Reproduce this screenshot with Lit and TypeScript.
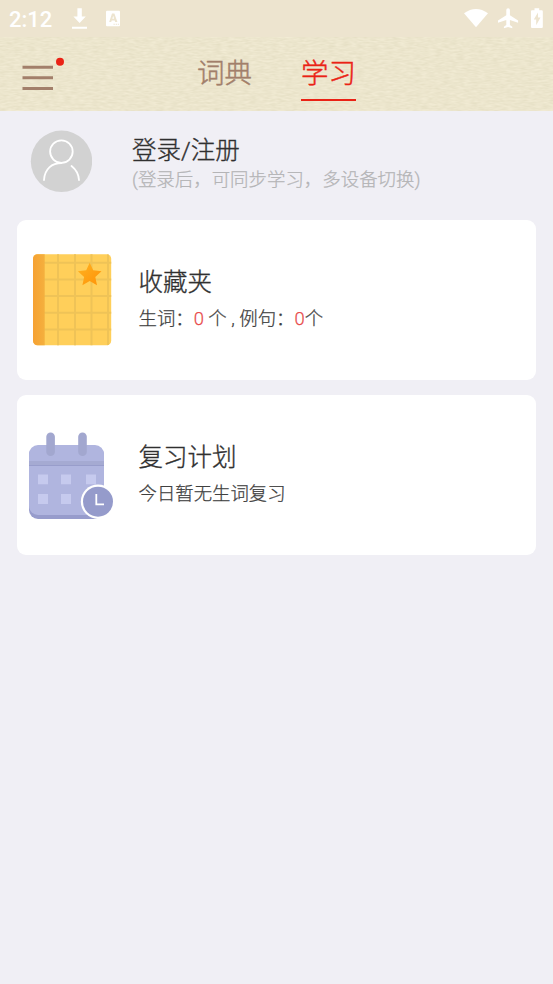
import { LitElement, html, svg, css } from "lit";
import { customElement } from "lit/decorators.js";

const FONT = css`Roboto, "Noto Sans CJK SC", sans-serif`;

@customElement("status-bar")
class StatusBar extends LitElement {
  static styles = css`
    :host {
      display: flex;
      align-items: center;
      height: 37px;
      background: #ede4cf;
      color: #fff;
      font: 500 22px/37px ${FONT};
    }
    .time { box-sizing: border-box; width: 71px; padding: 1px 0 0 9px; }
    .grow { flex: 1; }
    svg { display: block; fill: #fff; }
  `;
  render() {
    return html`
      <span class="time">2:12</span>
      <svg width="50" height="37" viewBox="71 0 50 37">
        <path d="M77.4 8.3h4.4v8.2h4L79.6 23l-6.2-6.500h4zM72 26.800h15v2H72z" />
        <rect x="106" y="10.800" width="14" height="15.400" rx="1" />
        <path fill="#ede4cf" fill-rule="evenodd" d="M112 13.500h2.400l3 8.500h-2.200l-.5-1.600h-3l-.5 1.600H109.200zm1.200 2.200-.9 3h1.800zM113.500 23.800h1.300v1h-1.300zM115.700 23.800h1.300v1h-1.300zM117.800 23.800h1.200v1h-1.200z" />
      </svg>
      <span class="grow"></span>
      <svg width="93" height="37" viewBox="460 0 93 37">
        <path d="M464 13.200Q476 4.700 488 13.200L476 27.300z" />
        <path d="M506.300 10a1.800 1.800 0 0 1 3.600 0v5.300l8.200 5.200v2.200l-8.200-2.600v5l2.400 1.700v1.500l-4.200-1.200-4.200 1.200v-1.500l2.400-1.700v-5l-8.300 2.600v-2.200l8.300-5.200z" />
        <path d="M534.500 8.300h4.700v2h2.600a1 1 0 0 1 1 1v15.600a1 1 0 0 1-1 1h-9.800a1 1 0 0 1-1-1V11.300a1 1 0 0 1 1-1h2.500z" />
        <path fill="#ede4cf" d="M538 12.500v5h2.500l-4.300 7.800v-5.800h-2.400z" />
      </svg>
    `;
  }
}

@customElement("top-bar")
class TopBar extends LitElement {
  static styles = css`
    :host {
      display: flex;
      position: relative;
      height: 74px;
      background: #ebe4c9;
      font: 300 27.500px/44px ${FONT};
      -webkit-text-stroke: 0.450px currentColor;
      color: #a27f6a;
    }
    .paper { position: absolute; inset: 0; width: 100%; height: 100%; }
    .menu { position: relative; display: block; width: 197px; height: 74px; }
    .tabs { position: relative; display: flex; gap: 49px; padding-top: 15px; }
    .tab { width: 55px; height: 47px; white-space: nowrap; border-bottom: 2.500px solid transparent; }
    .active { color: #ea2215; border-color: #ea2215; }
  `;
  render() {
    return html`
      <svg class="paper">
        <filter id="grain" x="0" y="0" width="100%" height="100%" color-interpolation-filters="sRGB">
          <feTurbulence type="fractalNoise" baseFrequency="0.14 0.55" numOctaves="2" seed="8" result="n" />
          <feColorMatrix in="n" type="matrix" values="0.070 0 0 0 0.890  0.070 0 0 0 0.865  0.090 0 0 0 0.758  0 0 0 0 1" />
        </filter>
        <rect width="100%" height="100%" filter="url(#grain)" />
      </svg>
      <svg class="menu" viewBox="0 37 197 74">
        <path d="M22.500 67.300H53M22.500 77.800H53M22.500 88.500H53" stroke="#a27f6a" stroke-width="3" />
        <circle cx="60" cy="61.700" r="4" fill="#ea2215" />
      </svg>
      <nav class="tabs">
        <span class="tab">词典</span>
        <span class="tab active">学习</span>
      </nav>
    `;
  }
}

@customElement("login-row")
class LoginRow extends LitElement {
  static styles = css`
    :host { display: flex; height: 109px; font-family: ${FONT}; font-weight: 300; -webkit-text-stroke: 0.350px currentColor; }
    .avatar { display: block; margin: 19px 40px 0 30px; }
    .title { font-size: 24.500px; line-height: 30px; color: #303030; padding-top: 25px; }
    .hint { font-size: 18.450px; line-height: 28px; color: #b4b4b6; white-space: nowrap; -webkit-text-stroke-width: 0.250px; }
  `;
  render() {
    return html`
      <svg class="avatar" width="62" height="62" viewBox="30 130 62 62">
        <circle cx="61.500" cy="161.300" r="30.700" fill="#d2d2d2" />
        <g fill="none" stroke="#fff" stroke-width="1.800" stroke-linecap="round">
          <circle cx="61.400" cy="151.600" r="11.300" />
          <path d="M44 180C44.500 169 52 163 61.500 163M71.500 166Q78.500 171.500 79 180" />
        </g>
      </svg>
      <div>
        <div class="title">登录/注册</div>
        <div class="hint">(登录后，可同步学习，多设备切换)</div>
      </div>
    `;
  }
}

const notebook = svg`
  <defs>
    <linearGradient id="spine"><stop stop-color="#f6a133" /><stop offset="1" stop-color="#f4b03e" /></linearGradient>
    <linearGradient id="star" x2="1" y2="1"><stop stop-color="#ffb321" /><stop offset="1" stop-color="#ff9208" /></linearGradient>
    <clipPath id="cover"><rect x="33" y="254.300" width="78.200" height="90.900" rx="4.500" /></clipPath>
  </defs>
  <g clip-path="url(#cover)">
    <path fill="#ffcf5a" d="M33 254h79v92H33z" />
    <path d="M44 262.800h68M44 279.500h68M44 296.100h68M44 312.800h68M44 329.400h68M58 254v92M75 254v92M91.500 254v92M108 254v92" stroke="#efc357" stroke-width="2" />
    <path fill="url(#spine)" d="M33 254h11.700v92H33z" />
  </g>
  <path fill="url(#star)" d="M89.700 262.700l3.500 7.600 8.300 1-6.200 5.600 1.700 8.400-7.300-4.200-7.300 4.200 1.700-8.400-6.200-5.600 8.300-1z" />
`;

const calendar = svg`
  <rect x="29" y="446" width="75" height="73" rx="9" fill="#979ccc" />
  <rect x="29" y="445" width="75" height="70" rx="9" fill="#b0b5df" />
  <path fill="#a5aad2" d="M29 461h75v4H29z" />
  <path fill="#989dcb" d="M29 465h75v1H29z" />
  <rect x="46.300" y="432.500" width="8.600" height="23.500" rx="4.300" fill="#a2a7cf" />
  <rect x="78.200" y="432.500" width="8.600" height="23.500" rx="4.300" fill="#a2a7cf" />
  <path fill="#c6caee" d="M38 474.500h10v9.700H38zM61 474.500h10v9.700H61zM86 474.500h10v9.700H86zM38 494h10v10H38zM61 494h10v10H61z" />
  <circle cx="98" cy="501.700" r="17.200" fill="#fff" />
  <circle cx="98" cy="501.700" r="15" fill="#959bcb" />
  <path d="M96.300 494v10.300h7.700" fill="none" stroke="#fff" stroke-width="1.800" />
`;

@customElement("study-card")
class StudyCard extends LitElement {
  static properties = { heading: {}, icon: {} };
  declare heading: string;
  declare icon: string;
  static styles = css`
    :host {
      display: flex;
      height: 160px;
      background: #fff;
      border-radius: 9px;
      font-family: ${FONT};
      font-weight: 300;
      -webkit-text-stroke: 0.350px currentColor;
    }
    svg { display: block; margin-left: 3px; width: 118.500px; height: 160px; }
    h2 { margin: 0; padding-top: 46px; font-size: 24.500px; font-weight: 300; line-height: 34px; color: #303030; }
    .detail { font-size: 18.400px; line-height: 38px; color: #404040; white-space: pre; -webkit-text-stroke-width: 0.250px; }
  `;
  render() {
    const book = this.icon === "notebook";
    return html`
      <svg viewBox="20 ${book ? 220 : 395} 118.500 160">${book ? notebook : calendar}</svg>
      <div>
        <h2>${this.heading}</h2>
        <div class="detail"><slot></slot></div>
      </div>
    `;
  }
}

@customElement("app-root")
class AppRoot extends LitElement {
  static styles = css`
    :host { display: block; min-height: 100vh; background: #f0eff5; }
    .cards { display: flex; flex-direction: column; gap: 15px; margin: 0 17px; }
    .count { color: #e84b4b; -webkit-text-stroke-color: #e84b4b; }
  `;
  render() {
    return html`
      <status-bar></status-bar>
      <top-bar></top-bar>
      <login-row></login-row>
      <main class="cards">
        <study-card heading="收藏夹" icon="notebook">生词：<span class="count">0</span> 个 , 例句：<span class="count">0</span>个</study-card>
        <study-card heading="复习计划" icon="calendar">今日暂无生词复习</study-card>
      </main>
    `;
  }
}
